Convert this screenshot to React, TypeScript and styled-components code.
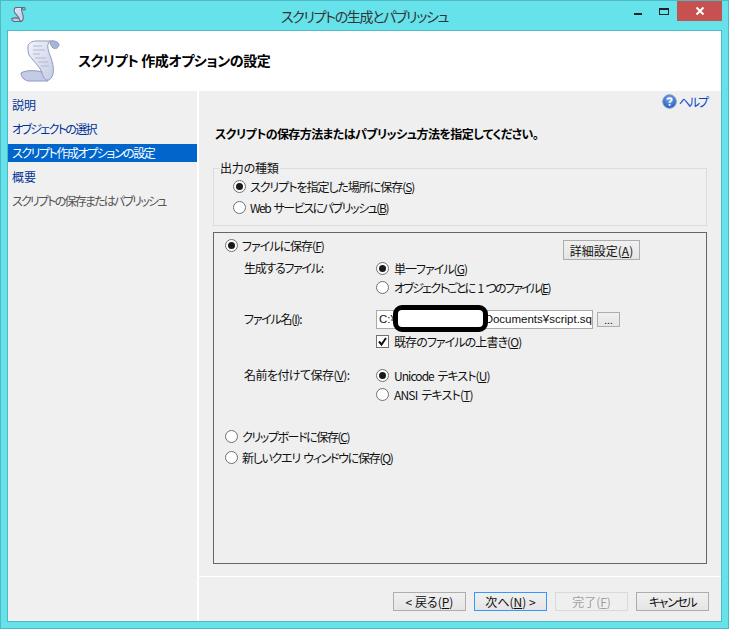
import React from "react";
import styled, { createGlobalStyle } from "styled-components";

const Global = createGlobalStyle`
  html, body { margin: 0; padding: 0; background: #66e2ea; }
  body {
    font-family: "Noto Sans CJK JP", "Liberation Sans", sans-serif;
    font-size: 12px;
    font-feature-settings: "palt";
    letter-spacing: -1px;
    color: #111;
  }
  * { box-sizing: border-box; }
`;

const Win = styled.div`
  width: 729px;
  height: 629px;
  background: #66e2ea;
  border: 1px solid #4fb8c4;
  display: flex;
  flex-direction: column;
  overflow: hidden;
`;
const TitleBar = styled.div`
  height: 29px;
  flex: none;
  display: grid;
  grid-template-columns: 1fr auto 1fr;
  align-items: start;
`;
const TitleIconWrap = styled.div`
  padding: 6px 0 0 10px;
  height: 22px;
  display: flex;
`;
const TitleText = styled.div`
  font-size: 14px;
  line-height: 30px;
  color: #333;
  letter-spacing: -1.3px;
`;
const WinControls = styled.div`
  display: flex;
  justify-content: flex-end;
  align-items: flex-start;
  margin-right: 6px;
`;
const CtlBtn = styled.div`
  width: 26px;
  height: 20px;
  display: flex;
  align-items: center;
  justify-content: center;
`;
const CloseBtn = styled.div`
  width: 45px;
  height: 20px;
  background: #c75050;
  display: flex;
  align-items: center;
  justify-content: center;
`;
const Client = styled.div`
  margin: 0 6px 6px 6px;
  flex: 1;
  min-height: 0;
  background: #fff;
  border: 1px solid #4fb8c4;
  display: flex;
  flex-direction: column;
`;
const Header = styled.header`
  height: 60px;
  flex: none;
  display: flex;
  align-items: center;
  padding-left: 11px;
  gap: 17px;
`;
const HeaderTitle = styled.h1`
  margin: 0 0 2px;
  font-size: 14px;
  font-weight: 700;
  color: #000;
  letter-spacing: -0.4px;
`;
const Body = styled.div`
  flex: 1;
  min-height: 0;
  display: flex;
  gap: 2px;
`;
const Nav = styled.nav`
  width: 189px;
  flex: none;
  background: #f0f0f0;
  padding-top: 5px;
  display: flex;
  flex-direction: column;
  gap: 6px;
`;
const NavItem = styled.div<{ $kind: "link" | "active" | "muted"; $ls?: number }>`
  height: 18px;
  line-height: 18px;
  padding-left: 4px;
  white-space: nowrap;
  font-size: 12px;
  letter-spacing: ${(p) => p.$ls ?? -1.45}px;
  color: ${(p) => (p.$kind === "link" ? "#003399" : p.$kind === "active" ? "#fff" : "#555")};
  background: ${(p) => (p.$kind === "active" ? "#0066cc" : "transparent")};
`;
const Main = styled.main`
  flex: 1;
  min-width: 0;
  background: #efefef;
  display: flex;
  flex-direction: column;
`;
const HelpRow = styled.div`
  height: 20px;
  padding: 0 14px 0 0;
  display: flex;
  justify-content: flex-end;
  align-items: center;
  gap: 2px;
  color: #0645c8;
  letter-spacing: -2px;
`;
const Heading = styled.h2`
  margin: 14px 0 0 16px;
  height: 18px;
  line-height: 18px;
  font-size: 12px;
  font-weight: 700;
  color: #000;
  letter-spacing: -0.57px;
`;
const Content = styled.div`
  padding: 0 14px;
`;
const Group = styled.fieldset`
  margin: 25px 0 0 0;
  padding: 0;
  height: 58px;
  border: 1px solid #dcdcdc;
  background: #f0f0f0;
  position: relative;
`;
const GroupLabel = styled.div`
  position: absolute;
  left: 6px;
  top: -9px;
  padding: 0 1px 0 0;
  height: 16px;
  line-height: 16px;
  background: #efefef;
  letter-spacing: -0.2px;
`;
const GroupInner = styled.div`
  padding: 8px 0 0 19px;
  display: flex;
  flex-direction: column;
  gap: 3px;
`;
const Panel = styled.section`
  margin-top: 6px;
  height: 332px;
  border: 1px solid #666;
  display: flex;
  flex-direction: column;
  padding: 3px 66px 0 11px;
`;
const TopRow = styled.div`
  display: flex;
  justify-content: space-between;
  align-items: flex-start;
  height: 22px;
`;
const FieldRow = styled.div<{ $top: number }>`
  margin-top: ${(p) => p.$top}px;
  display: grid;
  grid-template-columns: 132px 1fr;
  padding-left: 19px;
`;
const FieldLabel = styled.div<{ $ls: number }>`
  height: 18px;
  line-height: 18px;
  white-space: nowrap;
  letter-spacing: ${(p) => p.$ls}px;
`;
const Stack = styled.div<{ $gap?: number }>`
  display: flex;
  flex-direction: column;
  gap: ${(p) => p.$gap ?? 1}px;
`;
const OptionRow = styled.label<{ $gap?: number }>`
  height: 18px;
  display: flex;
  align-items: center;
  gap: ${(p) => p.$gap ?? 4}px;
  white-space: nowrap;
`;
const OptionText = styled.span<{ $ls?: number }>`
  letter-spacing: ${(p) => p.$ls ?? -1}px;
  word-spacing: 2px;
`;
const RadioCircle = styled.span<{ $on?: boolean }>`
  width: 13px;
  height: 13px;
  flex: none;
  border-radius: 50%;
  border: 1px solid #707070;
  background: #fff;
  display: flex;
  align-items: center;
  justify-content: center;
  &::after {
    content: "";
    width: 7px;
    height: 7px;
    border-radius: 50%;
    background: ${(p) => (p.$on ? "#1a1a1a" : "transparent")};
  }
`;
const CheckBox = styled.span`
  width: 13px;
  height: 13px;
  flex: none;
  border: 1px solid #707070;
  background: #fff;
  display: flex;
  align-items: center;
  justify-content: center;
`;
const PathRow = styled.div`
  display: flex;
  align-items: center;
  gap: 4px;
  position: relative;
  height: 18px;
`;
const PathInput = styled.div`
  width: 217px;
  height: 19px;
  border: 1px solid #aaa;
  background: #fff;
  line-height: 17px;
  padding-left: 2px;
  display: flex;
  justify-content: space-between;
  overflow: hidden;
  white-space: nowrap;
  font-family: "Liberation Sans", "Noto Sans CJK JP", sans-serif;
  font-size: 11.5px;
  letter-spacing: 0;
`;
const PathEnd = styled.span`
  font-family: "Liberation Sans", "Noto Sans CJK JP", sans-serif;
`;
const Redaction = styled.div`
  position: absolute;
  left: 17px;
  top: -5px;
  width: 95px;
  height: 27px;
  background: #fff;
  border: 5px solid #000;
  border-radius: 9px;
`;
const Btn = styled.button<{ $kind?: "default" | "disabled"; $ls?: number }>`
  font: inherit;
  font-feature-settings: inherit;
  letter-spacing: ${(p) => p.$ls ?? 0}px;
  padding: 0;
  width: 73px;
  height: 19px;
  line-height: 15px;
  border: 1px solid ${(p) => (p.$kind === "default" ? "#3399ff" : p.$kind === "disabled" ? "#d9d9d9" : "#adadad")};
  background: ${(p) => (p.$kind === "disabled" ? "#efefef" : "linear-gradient(#f0f0f0, #e5e5e5)")};
  color: ${(p) => (p.$kind === "disabled" ? "#a0a0a0" : "#111")};
`;
const DetailBtn = styled(Btn)`
  width: 77px;
  height: 20px;
  margin-top: 4px;
`;
const BrowseBtn = styled(Btn)`
  width: 23px;
  height: 15px;
  line-height: 9px;
  font-size: 10px;
`;
const OptionGap = styled.div`
  height: 21px;
`;
const Spacer = styled.div`
  flex: 1;
`;
const Footer = styled.footer`
  height: 45px;
  flex: none;
  border-top: 1px solid #fff;
  padding: 15px 12px 0 0;
  display: flex;
  justify-content: flex-end;
  gap: 8px;
`;

const Radio = ({ on, gap, ls, children }: { on?: boolean; gap?: number; ls?: number; children: React.ReactNode }) => (
  <OptionRow $gap={gap}>
    <RadioCircle $on={on} />
    <OptionText $ls={ls}>{children}</OptionText>
  </OptionRow>
);

const Scroll = ({ size, line }: { size: number; line: string }) => (
  <svg width={size} height={size} viewBox="0 0 40 42">
    <defs>
      <linearGradient id={`s${size}`} x1="0" x2="1" y1="0" y2="1">
        <stop offset="0" stopColor="#f2f4fa" />
        <stop offset="1" stopColor="#c5cde6" />
      </linearGradient>
    </defs>
    <path d="M1 33 C6 30 14 30 22 32 L28 41 L8 41 C4 40 1 37 1 33Z" fill="#c3cbe6" stroke={line} strokeWidth={size < 20 ? 3 : 1} />
    <path d="M8 7 C8 3 12 1 16 1 L30 1 C26 5 28 10 31 18 C34 27 35 36 29 40 C25 41 23 37 22 33 C21 28 14 22 9 15 C8 12 8 10 8 7Z" fill={`url(#s${size})`} stroke={line} strokeWidth={size < 20 ? 3 : 1} />
    <path d="M30 1 C34 0 39 2 39 5 C38 9 35 9 33 8 C31 6 30 4 30 1Z" fill="#aab4d6" stroke={line} strokeWidth={size < 20 ? 3 : 1} />
    <path d="M13 6 H22 M13 10 H25 M13 14 H20 M15 18 H26 M18 22 H28 M21 26 H29" stroke="#b3bad0" strokeWidth="1" fill="none" />
  </svg>
);

const HelpIcon = () => (
  <svg width="15" height="15" viewBox="0 0 15 15">
    <defs>
      <radialGradient id="hp" cx="0.5" cy="0.35" r="0.7">
        <stop offset="0" stopColor="#7fb0ee" />
        <stop offset="1" stopColor="#1c4fb8" />
      </radialGradient>
    </defs>
    <circle cx="7.5" cy="7.5" r="6.8" fill="url(#hp)" stroke="#7d9cc9" />
    <path d="M5.3 5.6 C5.5 3.6 9.7 3.5 9.8 5.7 C9.8 7.2 7.6 7.2 7.6 9" stroke="#fff" strokeWidth="1.7" fill="none" />
    <rect x="6.7" y="10" width="1.8" height="1.8" fill="#fff" />
  </svg>
);

export default function App() {
  return (
    <>
      <Global />
      <Win>
        <TitleBar>
          <TitleIconWrap>
            <Scroll size={15} line="#5f6b80" />
          </TitleIconWrap>
          <TitleText>スクリプトの生成とパブリッシュ</TitleText>
          <WinControls>
            <CtlBtn>
              <svg width="10" height="10" viewBox="0 0 10 10"><rect x="1" y="7" width="8" height="2" fill="#222" /></svg>
            </CtlBtn>
            <CtlBtn>
              <svg width="12" height="10" viewBox="0 0 12 10"><rect x="1.5" y="2.5" width="9" height="6" stroke="#222" strokeWidth="1" fill="none" /><rect x="1" y="2" width="10" height="2" fill="#222" /></svg>
            </CtlBtn>
            <CloseBtn>
              <svg width="10" height="10" viewBox="0 0 10 10"><path d="M1.5 1.5L8.5 8.5M8.5 1.5L1.5 8.5" stroke="#fff" strokeWidth="2" /></svg>
            </CloseBtn>
          </WinControls>
        </TitleBar>
        <Client>
          <Header>
            <Scroll size={42} line="#8f9bc0" />
            <HeaderTitle>スクリプト 作成オプションの設定</HeaderTitle>
          </Header>
          <Body>
            <Nav>
              <NavItem $kind="link" $ls={0}>説明</NavItem>
              <NavItem $kind="link" $ls={-1.65}>オブジェクトの選択</NavItem>
              <NavItem $kind="active">スクリプト作成オプションの設定</NavItem>
              <NavItem $kind="link" $ls={0}>概要</NavItem>
              <NavItem $kind="muted" $ls={-1.8}>スクリプトの保存またはパブリッシュ</NavItem>
            </Nav>
            <Main>
              <HelpRow>
                <HelpIcon />
                <span>ヘルプ</span>
              </HelpRow>
              <Heading>スクリプトの保存方法またはパブリッシュ方法を指定してください。</Heading>
              <Content>
                <Group>
                  <GroupLabel>出力の種類</GroupLabel>
                  <GroupInner>
                    <Radio on ls={-1.05}>スクリプトを指定した場所に保存(<u>S</u>)</Radio>
                    <Radio ls={-1.45}>Web サービスにパブリッシュ(<u>B</u>)</Radio>
                  </GroupInner>
                </Group>
                <Panel>
                  <TopRow>
                    <Radio on ls={-1}>ファイルに保存(<u>F</u>)</Radio>
                    <DetailBtn>詳細設定(<u>A</u>)</DetailBtn>
                  </TopRow>
                  <FieldRow $top={1}>
                    <FieldLabel $ls={-1.3}>生成するファイル:</FieldLabel>
                    <Stack>
                      <Radio on gap={5} ls={-1}>単一ファイル(<u>G</u>)</Radio>
                      <Radio gap={5} ls={-1.7}>オブジェクトごとに 1 つのファイル(<u>E</u>)</Radio>
                    </Stack>
                  </FieldRow>
                  <FieldRow $top={14}>
                    <FieldLabel $ls={-1.25}>ファイル名(<u>I</u>):</FieldLabel>
                    <Stack $gap={4}>
                      <PathRow>
                        <PathInput>
                          <span>C:¥</span>
                          <PathEnd>Documents¥script.sq</PathEnd>
                        </PathInput>
                        <BrowseBtn>...</BrowseBtn>
                        <Redaction />
                      </PathRow>
                      <OptionRow $gap={5}>
                        <CheckBox>
                          <svg width="11" height="11" viewBox="0 0 11 11"><path d="M2 5.5L4.5 8.5L9 2" stroke="#111" strokeWidth="2" fill="none" /></svg>
                        </CheckBox>
                        <OptionText $ls={-0.92}>既存のファイルの上書き(<u>O</u>)</OptionText>
                      </OptionRow>
                    </Stack>
                  </FieldRow>
                  <FieldRow $top={16}>
                    <FieldLabel $ls={-0.55}>名前を付けて保存(<u>V</u>):</FieldLabel>
                    <Stack>
                      <Radio on gap={5} ls={-0.95}>Unicode テキスト(<u>U</u>)</Radio>
                      <Radio gap={5} ls={-0.8}>ANSI テキスト(<u>T</u>)</Radio>
                    </Stack>
                  </FieldRow>
                  <Stack $gap={3}>
                    <OptionGap />
                    <Radio ls={-1.4}>クリップボードに保存(<u>C</u>)</Radio>
                    <Radio ls={-1.3}>新しいクエリ ウィンドウに保存(<u>Q</u>)</Radio>
                  </Stack>
                </Panel>
              </Content>
              <Spacer />
              <Footer>
                <Btn>&lt; 戻る(<u>P</u>)</Btn>
                <Btn $kind="default">次へ(<u>N</u>) &gt;</Btn>
                <Btn $kind="disabled">完了(<u>F</u>)</Btn>
                <Btn $ls={-1.4}>キャンセル</Btn>
              </Footer>
            </Main>
          </Body>
        </Client>
      </Win>
    </>
  );
}
